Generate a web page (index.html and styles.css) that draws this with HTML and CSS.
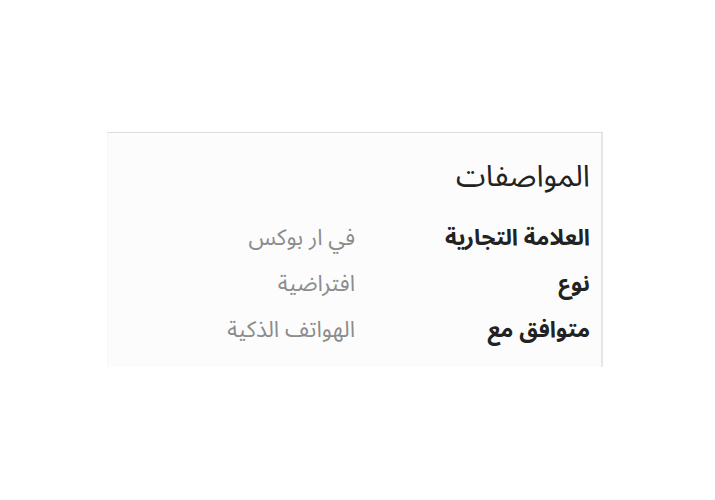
FILE: index.html
```html
<!DOCTYPE html>
<html lang="ar" dir="rtl">
<head>
<meta charset="utf-8">
<link rel="stylesheet" href="styles.css">
</head>
<body>
<div class="page">
  <section class="card">
    <h2 class="title">المواصفات</h2>
    <div class="specs">
      <div class="row"><div class="label">العلامة التجارية</div><div class="value">في ار بوكس</div></div>
      <div class="row"><div class="label">نوع</div><div class="value">افتراضية</div></div>
      <div class="row"><div class="label">متوافق مع</div><div class="value">الهواتف الذكية</div></div>
    </div>
  </section>
</div>
</body>
</html>
```
FILE: styles.css
```css
html, body {
  margin: 0;
  padding: 0;
  background: #ffffff;
}
body {
  width: 715px;
  height: 500px;
  font-family: "Noto Sans Arabic", "DejaVu Sans", sans-serif;
  color: #222;
}
.page {
  padding-top: 132px;
  padding-right: 112px;
  direction: rtl;
}
.card {
  width: 496px;
  height: 235px;
  box-sizing: border-box;
  background: #fcfcfc;
  border-top: 1px solid #dcdcdc;
  border-right: 2px solid #e6e6e6;
  border-left: 1px solid #f6f6f6;
  padding: 24px 11px 0 0;
}
.title {
  margin: 0 0 26px 0;
  font-size: 30px;
  font-weight: normal;
  line-height: 40px;
  color: #222;
}
.specs {
  display: flex;
  flex-direction: column;
  gap: 16px;
}
.row {
  display: flex;
  align-items: center;
  height: 30px;
  line-height: 30px;
}
.label {
  width: 235px;
  font-size: 22.5px;
  font-weight: bold;
  color: #222;
}
.value {
  font-size: 22.5px;
  color: #8c8c8c;
}
```
